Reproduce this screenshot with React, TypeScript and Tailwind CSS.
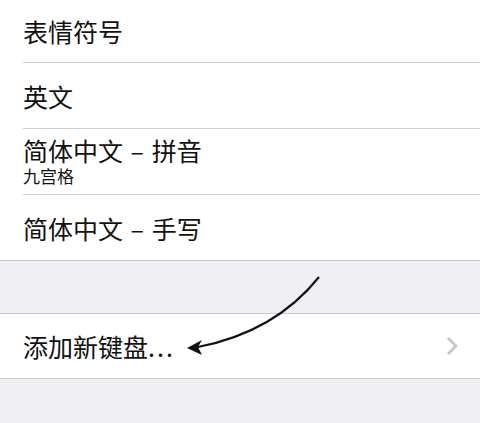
export default function App() {
  const font = { fontFamily: '"Noto Sans CJK SC", "Noto Sans", sans-serif' };
  return (
    <div className="relative w-[480px] h-[423px] bg-[#efeff4] overflow-hidden text-[#111]" style={font}>
      <div className="bg-white border-b border-[#c8c7cc]">
        <div className="h-[62px] flex items-center pl-[23px]">
          <span className="text-[25px] leading-[30px]">表情符号</span>
        </div>
        <div className="ml-[23px] h-px bg-[#d0d0d4]" />
        <div className="h-[65px] flex items-center pl-[23px]">
          <span className="text-[25px] leading-[30px]">英文</span>
        </div>
        <div className="ml-[23px] h-px bg-[#d0d0d4]" />
        <div className="h-[65px] flex flex-col pl-[23px] pt-[7px]">
          <span className="text-[25px] leading-[28px]">
            简体中文<span className="mx-[2px]"> – </span>拼音
          </span>
          <span className="text-[17px] leading-[20px] mt-[2px]">九宫格</span>
        </div>
        <div className="ml-[23px] h-px bg-[#d0d0d4]" />
        <div className="h-[65px] flex items-center pl-[23px]">
          <span className="text-[25px] leading-[30px]">
            简体中文<span className="mx-[2px]"> – </span>手写
          </span>
        </div>
      </div>
      <div className="h-[52px]" />
      <div className="bg-white border-y border-[#c8c7cc] h-[66px] flex items-center pl-[23px] pr-[22px]">
        <span className="text-[25px] leading-[30px] flex-1">
          添加新键盘<span className="tracking-[2px]">...</span>
        </span>
        <svg width="12" height="20" viewBox="0 0 12 20">
          <path d="M2 2 L10 10 L2 18" fill="none" stroke="#c7c7cc" strokeWidth="3" />
        </svg>
      </div>
      <svg className="absolute left-0 top-0" width="480" height="423" viewBox="0 0 480 423">
        <path d="M319 277 Q 275 332 198 347" fill="none" stroke="#111" strokeWidth="2.2" />
        <path d="M187 348 L202 340 L198 347 L202 355 Z" fill="#111" />
      </svg>
    </div>
  );
}
